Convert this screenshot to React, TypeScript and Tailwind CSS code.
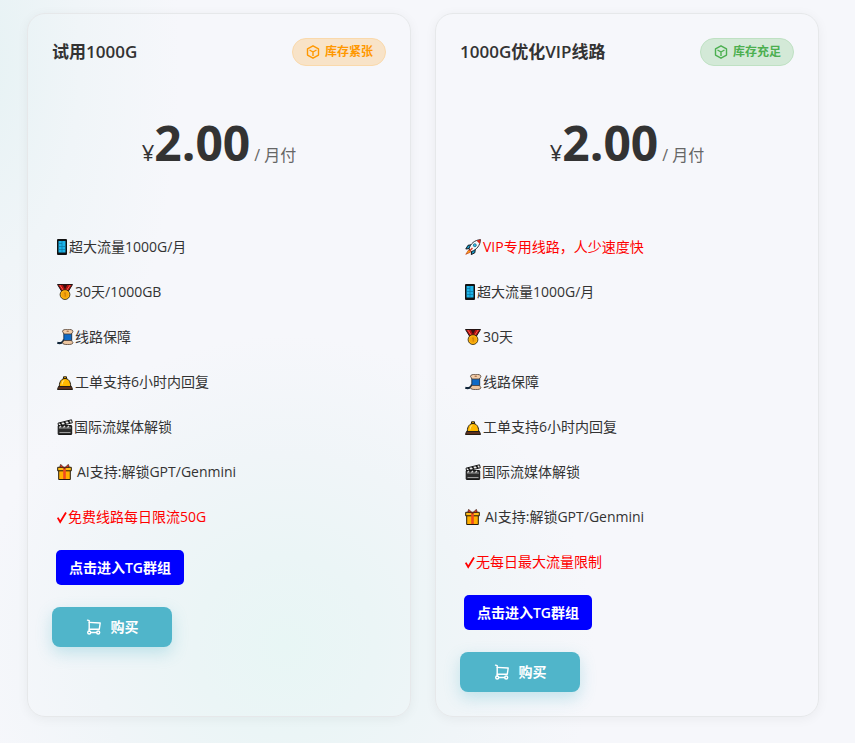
import type { ReactNode } from 'react';

type IconName = 'phone' | 'medal' | 'thread' | 'bell' | 'clapper' | 'gift' | 'rocket' | 'check';

type Feature = {
  icon: IconName;
  text: string;
  highlight?: boolean;
};

type Plan = {
  name: string;
  stock: 'low' | 'ok';
  price: string;
  features: Feature[];
};

const commonFeatures: Feature[] = [
  { icon: 'thread', text: '线路保障' },
  { icon: 'bell', text: '工单支持6小时内回复' },
  { icon: 'clapper', text: '国际流媒体解锁' },
  { icon: 'gift', text: 'AI支持:解锁GPT/Genmini' },
];

const plans: Plan[] = [
  {
    name: '试用1000G',
    stock: 'low',
    price: '2.00',
    features: [
      { icon: 'phone', text: '超大流量1000G/月' },
      { icon: 'medal', text: '30天/1000GB' },
      ...commonFeatures,
      { icon: 'check', text: '免费线路每日限流50G', highlight: true },
    ],
  },
  {
    name: '1000G优化VIP线路',
    stock: 'ok',
    price: '2.00',
    features: [
      { icon: 'rocket', text: 'VIP专用线路，人少速度快', highlight: true },
      { icon: 'phone', text: '超大流量1000G/月' },
      { icon: 'medal', text: '30天' },
      ...commonFeatures,
      { icon: 'check', text: '无每日最大流量限制', highlight: true },
    ],
  },
];

const iconWidths: Record<IconName, string> = {
  phone: 'w-3',
  medal: 'w-[18px]',
  thread: 'w-[18px]',
  bell: 'w-[18px]',
  clapper: 'w-[17px]',
  gift: 'w-[20px]',
  rocket: 'w-[18px]',
  check: 'w-[11px]',
};

const iconBoxes: Record<IconName, string> = {
  phone: '0 0 12 16',
  medal: '0 0 18 16',
  thread: '0 0 18 16',
  bell: '0 0 18 16',
  clapper: '0 0 17 16',
  gift: '0 0 20 16',
  rocket: '0 0 18 16',
  check: '0 0 11 16',
};

const iconShapes: Record<IconName, ReactNode> = {
  phone: (
    <>
      <rect x="0" y="0" width="10" height="16" rx="1" fill="#111" />
      <rect x="1.5" y="2" width="7" height="11.5" fill="#1db4e8" />
      <path d="M5 2v5M1.500 4.500H5M1.500 7.500h7M5 7.500v6M1.500 10.500h7" fill="none" stroke="#0b6d98" strokeWidth="0.600" />
    </>
  ),
  medal: (
    <>
      <path d="M.5.500h15L11.500 7h-7z" fill="#b3110f" stroke="#1d1413" strokeLinejoin="round" />
      <path d="M5.500.500h5L8 5.500z" fill="#3a0f10" />
      <path d="M2.800 1l3.700 5.500M13.200 1L9.500 6.500" stroke="#ff5a4e" strokeWidth="1" />
      <circle cx="8" cy="10.600" r="4.900" fill="#ffb70f" stroke="#2a1d09" strokeWidth="0.800" />
      <circle cx="8" cy="10.600" r="3.300" fill="#f5a40c" />
      <path d="M7.300 9.300l.9-.6v4" fill="none" stroke="#b8700a" strokeWidth="0.8" />
    </>
  ),
  thread: (
    <>
      <path d="M.3 13.800c3 .8 6.200.2 6.700-3.300" fill="none" stroke="#0f2438" strokeWidth="2.200" />
      <path d="M6.800 3h7.900v10H6.800z" fill="#0f6ac6" stroke="#182230" strokeWidth="0.800" />
      <path d="M5.500 2.300C5.500.8 8 .3 10.700.3s5.200.5 5.200 2c0 1.400-1.200 1.600-1.700 2.700H7.300c-.4-1-1.800-1.400-1.800-2.700z" fill="#f2cdaa" stroke="#4a3a30" strokeWidth="0.800" />
      <ellipse cx="10.700" cy="2.200" rx="1.300" ry="0.700" fill="#a97550" />
      <path d="M7.300 11.500h6.900c.5.900 1.700 1.200 1.700 2.200 0 1.400-2.500 1.900-5.200 1.900s-5.200-.5-5.200-1.900c0-1 1.300-1.300 1.800-2.200z" fill="#edc6a0" stroke="#4a3a30" strokeWidth="0.800" />
    </>
  ),
  bell: (
    <>
      <path d="M6.500 2.800h3V5h-3z" fill="#ffb900" stroke="#231d15" />
      <path d="M2.300 12.500C2.300 7 5 4.500 8 4.500s5.700 2.500 5.700 8z" fill="#ffb900" stroke="#231d15" />
      <path d="M5 10.500c.1-2 .9-3.600 2.200-4.200" fill="none" stroke="#ffe27a" strokeWidth="1.100" />
      <path d="M1.500 12.500h13l1 3H.5z" fill="#5c301e" stroke="#231d15" strokeLinejoin="round" />
    </>
  ),
  clapper: (
    <>
      <path d="M1 4.200L14.500.8l.8 3L1.600 7z" fill="#eee" stroke="#161616" />
      <path d="M3 3.700l2 2.400M7 2.700l2 2.400M11 1.700l2 2.400" stroke="#161616" strokeWidth="1.600" />
      <rect x="1.200" y="6.500" width="13.500" height="9" rx="0.500" fill="#2c2c2c" stroke="#161616" />
      <path d="M2 9h12M2.500 13.500h11" stroke="#bbb" strokeWidth="0.800" />
      <path d="M4 6.800L2.500 8.500M8 6.800L6.500 8.500M12 6.800l-1.500 1.700" stroke="#ddd" strokeWidth="1.200" />
    </>
  ),
  gift: (
    <>
      <path d="M1.700 6h11.600v9.500H1.700z" fill="#ffb000" stroke="#251a0b" />
      <path d="M.7 3.300h13.600v3.500H.7z" fill="#ffbd18" stroke="#251a0b" />
      <path d="M6.200 3.500h2.600V15H6.200z" fill="#ef4a20" />
      <path d="M7.500 4L2.800 3l.8-2.700zM7.500 4l4.700-1-.8-2.700z" fill="#e0382a" stroke="#251a0b" strokeWidth="0.600" />
    </>
  ),
  rocket: (
    <>
      <path d="M3.800 10.800L.8 15.300l5-2.300z" fill="#ffad16" stroke="#c4461a" strokeWidth="0.800" />
      <path d="M6.500 5.800L3 6.300.8 10l3.700-.5zM10.300 9.700l-.4 4-3.600 1.900.4-4z" fill="#149fce" stroke="#15181d" />
      <path d="M4 10C5.500 4.500 9.500 1.200 15.500.6c-.4 5.900-3.700 9.900-8.900 12z" fill="#f4f8fa" stroke="#1c1d22" strokeWidth="0.900" />
      <path d="M11.500 1.700c1.200-.6 2.500-.9 4-1.100 0 1.600-.3 2.900-.8 4.100z" fill="#d8291f" />
      <circle cx="9.800" cy="6.200" r="1.500" fill="#31bce9" stroke="#1c5870" strokeWidth="0.700" />
      <path d="M4.500 12l3-3" stroke="#e33827" strokeWidth="1.400" />
    </>
  ),
  check: <path d="M.7 8.700l2.500 4.300L9 3.500" fill="none" stroke="#f00" strokeWidth="1.800" />,
};

function FeatureIcon({ name }: { name: IconName }) {
  return (
    <svg viewBox={iconBoxes[name]} className={`${iconWidths[name]} h-4 shrink-0`} aria-hidden="true">
      {iconShapes[name]}
    </svg>
  );
}

function StockBadge({ stock }: { stock: Plan['stock'] }) {
  const low = stock === 'low';

  return (
    <span
      className={`flex h-7 shrink-0 items-center gap-[5px] rounded-full border px-3 text-xs font-bold ${
        low
          ? 'border-[#fad9ab] bg-[#f8e3c8] text-[#ff9800]'
          : 'border-[#bfe1c3] bg-[#d3e9d7] text-[#4caf50]'
      }`}
    >
      <svg
        viewBox="0 0 15 14"
        className="h-[14px] w-[15px]"
        fill="none"
        stroke="currentColor"
        strokeWidth="1.400"
        strokeLinejoin="round"
        aria-hidden="true"
      >
        <path d="M8 .8l5.500 3.100v6.200L8 13.200l-5.500-3.100V3.900z" />
        <path d="M4.500 5L8 7l3.500-2M8 7v4" />
      </svg>
      {low ? '库存紧张' : '库存充足'}
    </span>
  );
}

function CartIcon() {
  return (
    <svg
      viewBox="0 0 16 16"
      className="h-4 w-4"
      fill="none"
      stroke="currentColor"
      strokeWidth="1.400"
      strokeLinecap="round"
      strokeLinejoin="round"
      aria-hidden="true"
    >
      <path d="M1.500 1.200l1.700.5v10.600" />
      <path d="M3.200 3.400l11 .6-.9 6.200H3.200" />
      <path d="M4.700 13.500h6" />
      <circle cx="3.200" cy="13.500" r="1.500" />
      <circle cx="12.200" cy="13.500" r="1.500" />
    </svg>
  );
}

function PlanCard({ plan }: { plan: Plan }) {
  return (
    <article className="flex flex-col items-start rounded-[18px] border border-[#e6e8ea] p-6 shadow-[0_2px_12px_rgba(0,0,0,0.05)]">
      <header className="flex w-full items-center justify-between">
        <h2 className="text-[17px] leading-7 font-semibold text-[#333]">{plan.name}</h2>
        <StockBadge stock={plan.stock} />
      </header>

      <div className="flex w-full justify-center pt-[47px] pb-[51px]">
        <p className="flex h-[60px] items-baseline leading-[60px] text-[#333]">
          <span className="text-[22px] font-medium">¥</span>
          <span className="text-5xl leading-[60px] font-bold">{plan.price}</span>
          <span className="ml-1 text-base text-[#666]">/ 月付</span>
        </p>
      </div>

      <ul className="px-[5px] text-sm text-[#333]">
        {plan.features.map((feature) => (
          <li
            key={feature.text}
            className={`flex h-[45px] items-center ${feature.highlight ? 'text-[#f00]' : ''}`}
          >
            <FeatureIcon name={feature.icon} />
            <span>{feature.text}</span>
          </li>
        ))}
      </ul>

      <a
        href="#telegram"
        className="mt-[11px] ml-1 flex h-[35px] w-32 items-center justify-center rounded-[5px] bg-[#00f] text-sm font-semibold text-white"
      >
        点击进入TG群组
      </a>

      <button
        type="button"
        className="mt-[22px] flex h-10 w-[120px] cursor-pointer items-center justify-center gap-[9px] rounded-lg bg-[#50b5ca] text-sm font-bold text-white shadow-[0_6px_16px_rgba(80,181,202,0.3)]"
      >
        <CartIcon />
        购买
      </button>
    </article>
  );
}

export default function App() {
  return (
    <main className="min-h-screen bg-[#f6f7fb] bg-[radial-gradient(circle_at_285px_645px,#e8f6f5_0,#ebf5f6_90px,#f0f5f8_190px,transparent_310px),radial-gradient(ellipse_200px_420px_at_-20px_60px,#e6f2f4_0,#f0f5f8_50%,transparent_100%)] pt-[13px] pr-9 pb-[26px] pl-[27px] font-['Open_Sans','Noto_Sans_CJK_SC',sans-serif]">
      <div className="grid grid-cols-2 gap-6">
        {plans.map((plan) => (
          <PlanCard key={plan.name} plan={plan} />
        ))}
      </div>
    </main>
  );
}
